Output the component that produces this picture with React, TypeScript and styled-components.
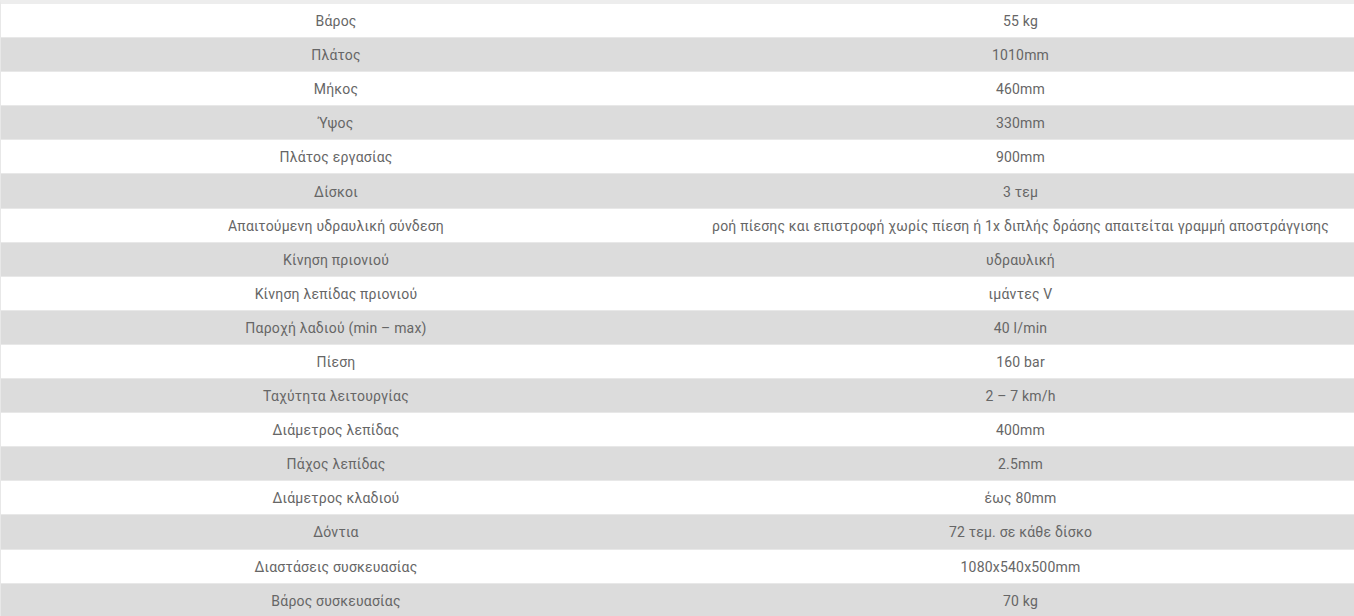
import styled, { createGlobalStyle } from 'styled-components'

const GlobalStyle = createGlobalStyle`
  html, body {
    margin: 0;
    padding: 0;
    background: #ffffff;
  }
  body {
    font-family: Roboto, 'Liberation Sans', Arial, sans-serif;
  }
`

type Spec = {
  label: string
  value: string
}

const specs: Spec[] = [
  { label: 'Βάρος', value: '55 kg' },
  { label: 'Πλάτος', value: '1010mm' },
  { label: 'Μήκος', value: '460mm' },
  { label: 'Ύψος', value: '330mm' },
  { label: 'Πλάτος εργασίας', value: '900mm' },
  { label: 'Δίσκοι', value: '3 τεμ' },
  {
    label: 'Απαιτούμενη υδραυλική σύνδεση',
    value:
      'ροή πίεσης και επιστροφή χωρίς πίεση ή 1x διπλής δράσης απαιτείται γραμμή αποστράγγισης',
  },
  { label: 'Κίνηση πριονιού', value: 'υδραυλική' },
  { label: 'Κίνηση λεπίδας πριονιού', value: 'ιμάντες V' },
  { label: 'Παροχή λαδιού (min – max)', value: '40 l/min' },
  { label: 'Πίεση', value: '160 bar' },
  { label: 'Ταχύτητα λειτουργίας', value: '2 – 7 km/h' },
  { label: 'Διάμετρος λεπίδας', value: '400mm' },
  { label: 'Πάχος λεπίδας', value: '2.5mm' },
  { label: 'Διάμετρος κλαδιού', value: 'έως 80mm' },
  { label: 'Δόντια', value: '72 τεμ. σε κάθε δίσκο' },
  { label: 'Διαστάσεις συσκευασίας', value: '1080x540x500mm' },
  { label: 'Βάρος συσκευασίας', value: '70 kg' },
]

const SpecTable = styled.div`
  display: flex;
  flex-direction: column;
  width: 1354px;
  border-top: 4px solid #ededed;
  border-left: 1px solid #e8e8e8;
  box-sizing: border-box;
`

type RowProps = {
  $striped: boolean
}

const SpecRow = styled.div<RowProps>`
  display: grid;
  grid-template-columns: 670px 1fr;
  height: 34.1px;
  flex-shrink: 0;
  box-sizing: border-box;
  border-bottom: 1px solid #e8e8e8;
  background: ${({ $striped }) => ($striped ? '#dcdcdc' : '#ffffff')};
`

const Cell = styled.div<{ $side: 'left' | 'right' }>`
  display: flex;
  align-items: center;
  justify-content: center;
  padding-left: ${({ $side }) => ($side === 'right' ? '16px' : '0')};
  padding-top: 1px;
  font-size: 14px;
  letter-spacing: 0.2px;
  line-height: 1;
  color: #666666;
  white-space: nowrap;
`

const App: React.FC = () => {
  return (
    <>
      <GlobalStyle />
      <SpecTable>
        {specs.map((spec, i) => (
          <SpecRow key={spec.label} $striped={i % 2 === 1}>
            <Cell $side="left">{spec.label}</Cell>
            <Cell $side="right">{spec.value}</Cell>
          </SpecRow>
        ))}
      </SpecTable>
    </>
  )
}

export default App
